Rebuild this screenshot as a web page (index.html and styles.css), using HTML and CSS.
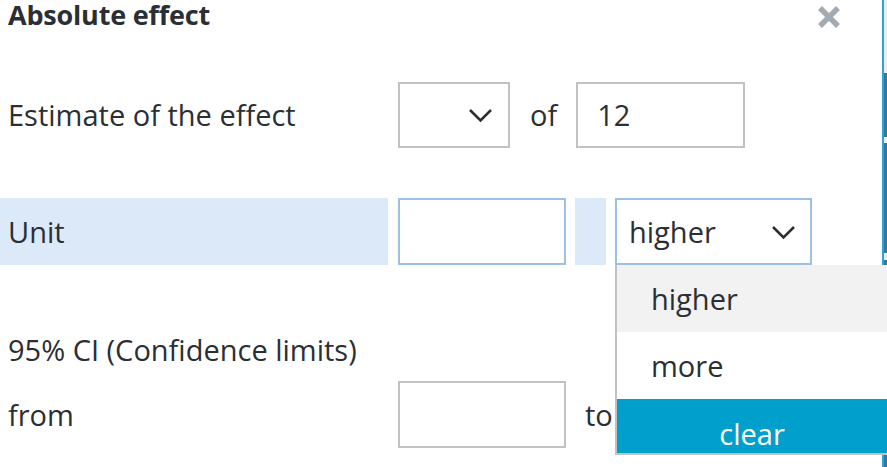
FILE: index.html
```html
<!DOCTYPE html>
<html lang="en">
<head>
<meta charset="utf-8">
<title>Absolute effect</title>
<link rel="stylesheet" href="styles.css">
</head>
<body>
<div class="modal">
  <div class="header">
    <h2 class="title">Absolute effect</h2>
    <button class="close" aria-label="Close">
      <svg width="24" height="24" viewBox="0 0 24 24"><path d="M3 3 L21 21 M21 3 L3 21" stroke="#a3aab1" stroke-width="5.5" stroke-linecap="butt"/></svg>
    </button>
  </div>

  <div class="row row-estimate">
    <div class="label">Estimate of the effect</div>
    <div class="select small">
      <span class="sel-text"></span>
      <svg class="chev" width="25" height="15" viewBox="0 0 25 15"><path d="M2 2 L12.5 12.5 L23 2" fill="none" stroke="#2b2f33" stroke-width="2.6"/></svg>
    </div>
    <span class="word of">of</span>
    <div class="input wide">12</div>
  </div>

  <div class="row row-unit">
    <div class="label hl">Unit</div>
    <div class="input blue"></div>
    <div class="spacer hl"></div>
    <div class="dd-wrap">
      <div class="select blue large">
        <span class="sel-text">higher</span>
        <svg class="chev" width="25" height="15" viewBox="0 0 25 15"><path d="M2 2 L12.5 12.5 L23 2" fill="none" stroke="#2b2f33" stroke-width="2.6"/></svg>
      </div>
      <ul class="menu">
        <li class="item active">higher</li>
        <li class="item">more</li>
        <li class="item clear">clear</li>
      </ul>
    </div>
  </div>

  <div class="row row-ci">
    <div class="label">95% CI (Confidence limits)</div>
  </div>

  <div class="row row-from">
    <div class="label">from</div>
    <div class="input"></div>
    <span class="word to">to</span>
  </div>
</div>
<div class="edge">
  <div class="edge-line"></div>
  <div class="edge-bar">
    <div class="seg light" style="height:73px"></div>
    <div class="seg dark" style="height:64px"></div>
    <div class="seg light" style="height:6px"></div>
    <div class="seg dark" style="height:110px"></div>
    <div class="seg light" style="height:7px"></div>
    <div class="seg dark" style="height:207px"></div>
  </div>
</div>
</body>
</html>
```

FILE: styles.css
```css
* { box-sizing: border-box; }
html, body {
  margin: 0;
  padding: 0;
  background: #ffffff;
  overflow: hidden;
}
body {
  width: 887px;
  height: 467px;
  position: relative;
  font-family: "Open Sans", "Noto Sans", sans-serif;
  color: #2b2f33;
}
.modal {
  width: 887px;
  height: 467px;
}
.header {
  display: flex;
  justify-content: space-between;
  align-items: flex-start;
  height: 34px;
}
.title {
  margin: 0;
  padding: 0 0 0 8px;
  font-size: 27px;
  line-height: 30px;
  font-weight: 700;
  letter-spacing: -0.2px;
}
.close {
  border: 0;
  background: none;
  padding: 0;
  margin: 5px 46px 0 0;
  width: 24px;
  height: 24px;
  display: block;
}
.close svg { display: block; }
.row {
  display: flex;
  align-items: center;
}
.label {
  width: 388px;
  padding-left: 8px;
  font-size: 29px;
  flex: none;
}
.row-estimate { margin-top: 47px; height: 67px; }
.row-unit { margin-top: 50px; height: 67px; align-items: stretch; }
.row-ci { margin-top: 67px; height: 34px; }
.row-from { margin-top: 15px; height: 67px; }

.row-unit .label { display: flex; align-items: center; }
.hl { background: #dce9f8; }

.select {
  border: 2px solid #c2c2c2;
  height: 66px;
  display: flex;
  align-items: center;
  justify-content: space-between;
  background: #fff;
  font-size: 29px;
}
.select.small {
  width: 112px;
  margin-left: 10px;
  padding: 0 15px 0 12px;
}
.select.large {
  width: 197px;
  height: 67px;
  padding: 0 14px 0 12px;
}
.select.blue, .input.blue { border-color: #9dc0e3; }
.chev { display: block; flex: none; margin-top: 2px; }

.word {
  font-size: 29px;
}
.of { margin: 0 19px 0 20px; }
.to { margin-left: 19px; }

.input {
  border: 2px solid #c2c2c2;
  width: 168px;
  height: 67px;
  margin-left: 10px;
  display: flex;
  align-items: center;
  font-size: 29px;
  padding-left: 19px;
  background: #fff;
}
.input.wide { width: 169px; height: 66px; margin-left: 0; }
.spacer { width: 31px; margin-left: 9px; margin-right: 9px; }

.dd-wrap { position: relative; }
.menu {
  position: absolute;
  left: 0;
  top: 67px;
  width: 272px;
  height: 190px;
  margin: 0;
  padding: 0;
  list-style: none;
  border-left: 2px solid #c2c2c2;
  border-bottom: 2px solid #c2c2c2;
  background: #fff;
  overflow: hidden;
  z-index: 3;
}
.item {
  height: 67px;
  padding-left: 34px;
  display: flex;
  align-items: center;
  font-size: 29px;
}
.item.active { background: #f2f2f2; }
.item.clear {
  background: #009fcc;
  color: #ffffff;
  justify-content: center;
  padding-left: 0;
  padding-top: 2px;
}

.edge {
  position: absolute;
  top: 0;
  left: 882px;
  width: 5px;
  height: 467px;
  display: flex;
  z-index: 1;
}
.edge-line { width: 2px; background: #2ea3d9; }
.edge-bar { width: 3px; display: flex; flex-direction: column; }
.seg.light { background: #ececec; }
.seg.dark { background: #2f7b9c; }
```
